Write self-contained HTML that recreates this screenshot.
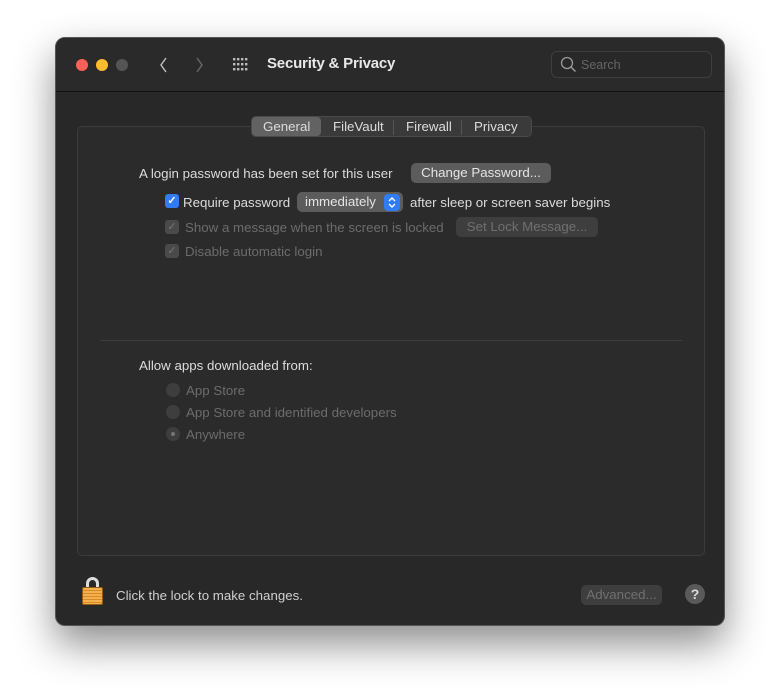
<!DOCTYPE html>
<html><head><meta charset="utf-8"><style>
*{margin:0;padding:0;box-sizing:border-box}
body{width:780px;height:699px;background:#fff;font-family:"Liberation Sans",sans-serif;position:relative;overflow:hidden}
.win{position:absolute;left:55px;top:37px;width:670px;height:589px;background:#282828;border-radius:10px;border:1px solid #555;box-shadow:0 18px 40px rgba(0,0,0,.45);overflow:hidden}
.tb{position:absolute;left:0;top:0;width:100%;height:54px;background:#2a2a2a;border-bottom:1px solid #111}
.a{position:absolute;white-space:nowrap}
.dot{position:absolute;top:21px;width:12px;height:12px;border-radius:50%}
.t{color:#dcdcdc;font-size:13.3px}
.d{color:#6c6c6c;font-size:13.3px}
.btn{position:absolute;background:#5c5c5c;border-radius:5px;color:#e4e4e4;font-size:13.3px;text-align:center;line-height:20px;height:20px}
.btnd{background:#3e3e3e;color:#707070}
.cb{position:absolute;width:14px;height:14px;border-radius:3px;background:#4a4a4a;color:#777;font-size:11px;line-height:14px;text-align:center}
.rd{position:absolute;width:14px;height:14px;border-radius:50%;background:#3e3e3e}
</style></head><body>
<div class="win">
 <div class="tb">
  <div class="dot" style="left:20px;background:#fe5f57"></div>
  <div class="dot" style="left:40px;background:#febc2e"></div>
  <div class="dot" style="left:60px;background:#555"></div>
  <svg class="a" style="left:102px;top:18px" width="10" height="18"><path d="M8 2 L3 9 L8 16" stroke="#bbb" stroke-width="1.5" fill="none"/></svg>
  <svg class="a" style="left:139px;top:18px" width="10" height="18"><path d="M2 2 L7 9 L2 16" stroke="#666" stroke-width="1.5" fill="none"/></svg>
  <svg class="a" style="left:177px;top:20px" width="18" height="14" fill="#bbb">
   <g><rect x="0" y="0" width="2.4" height="2.4"/><rect x="4" y="0" width="2.4" height="2.4"/><rect x="8" y="0" width="2.4" height="2.4"/><rect x="12" y="0" width="2.4" height="2.4"/>
   <rect x="0" y="5" width="2.4" height="2.4"/><rect x="4" y="5" width="2.4" height="2.4"/><rect x="8" y="5" width="2.4" height="2.4"/><rect x="12" y="5" width="2.4" height="2.4"/>
   <rect x="0" y="10" width="2.4" height="2.4"/><rect x="4" y="10" width="2.4" height="2.4"/><rect x="8" y="10" width="2.4" height="2.4"/><rect x="12" y="10" width="2.4" height="2.4"/></g></svg>
  <div class="a" style="left:211px;top:17px;color:#e8e8e8;font-size:15px;font-weight:bold;letter-spacing:-0.2px">Security &amp; Privacy</div>
  <div class="a" style="left:495px;top:13px;width:161px;height:27px;border:1px solid #3e3e3e;border-radius:6px;background:#282828"></div>
  <svg class="a" style="left:504px;top:18px" width="18" height="18"><circle cx="7" cy="7" r="5.5" stroke="#999" stroke-width="1.3" fill="none"/><path d="M11 11 L15.5 15.5" stroke="#999" stroke-width="1.5"/></svg>
  <div class="a" style="left:525px;top:20px;color:#666;font-size:12.5px">Search</div>
 </div>
 <div class="a" style="left:21px;top:88px;width:628px;height:430px;border:1px solid #3c3c3c;border-radius:5px;background:#2b2b2b"></div>
 <div class="a" style="left:195px;top:78px;width:281px;height:21px;border-radius:5px;background:#3a3a3a;border:1px solid #4a4a4a"></div>
 <div class="a" style="left:196px;top:79px;width:69px;height:19px;border-radius:4px;background:#626262"></div>
 <div class="a t" style="left:207px;top:81px">General</div>
 <div class="a t" style="left:277px;top:81px">FileVault</div>
 <div class="a" style="left:337px;top:82px;width:1px;height:15px;background:#555"></div>
 <div class="a t" style="left:350px;top:81px">Firewall</div>
 <div class="a" style="left:405px;top:82px;width:1px;height:15px;background:#555"></div>
 <div class="a t" style="left:418px;top:81px">Privacy</div>

 <div class="a t" style="left:83px;top:128px">A login password has been set for this user</div>
 <div class="btn" style="left:355px;top:125px;width:140px">Change Password...</div>
 <div class="cb" style="left:109px;top:156px;background:#2f7cf6;color:#fff;font-weight:bold">✓</div>
 <div class="a t" style="left:127px;top:157px">Require password</div>
 <div class="btn" style="left:241px;top:154px;width:106px;text-align:left;padding-left:8px">immediately</div>
 <svg class="a" style="left:328px;top:156px" width="16" height="17"><rect width="16" height="17" rx="4" fill="#2f7cf6"/><path d="M5 7 L8 4 L11 7 M5 10 L8 13 L11 10" stroke="#fff" stroke-width="1.4" fill="none"/></svg>
 <div class="a t" style="left:354px;top:157px">after sleep or screen saver begins</div>
 <div class="cb" style="left:109px;top:182px">✓</div>
 <div class="a d" style="left:129px;top:182px">Show a message when the screen is locked</div>
 <div class="btn btnd" style="left:400px;top:179px;width:142px">Set Lock Message...</div>
 <div class="cb" style="left:109px;top:206px">✓</div>
 <div class="a d" style="left:129px;top:206px">Disable automatic login</div>

 <div class="a" style="left:44px;top:302px;width:582px;height:1px;background:#3e3e3e"></div>
 <div class="a t" style="left:83px;top:320px">Allow apps downloaded from:</div>
 <div class="rd" style="left:110px;top:345px"></div>
 <div class="a d" style="left:130px;top:345px">App Store</div>
 <div class="rd" style="left:110px;top:367px"></div>
 <div class="a d" style="left:130px;top:367px">App Store and identified developers</div>
 <div class="rd" style="left:110px;top:389px"><div style="position:absolute;left:5px;top:5px;width:4px;height:4px;border-radius:50%;background:#777"></div></div>
 <div class="a d" style="left:130px;top:389px">Anywhere</div>

 <div class="a" style="left:30px;top:539px;width:13px;height:16px;border:3px solid #ddd;border-bottom:none;border-radius:7px 7px 0 0"></div>
 <div class="a" style="left:26px;top:549px;width:21px;height:18px;border-radius:2px;background:repeating-linear-gradient(#f3b04c 0 2px,#d88a2a 2px 3px);border:1px solid #9a5a10"></div>
 <div class="a" style="left:60px;top:550px;color:#cfcfcf;font-size:13.3px">Click the lock to make changes.</div>
 <div class="btn btnd" style="left:525px;top:547px;width:81px">Advanced...</div>
 <div class="a" style="left:629px;top:546px;width:20px;height:20px;border-radius:50%;background:#5a5a5a;color:#ddd;font-size:14px;font-weight:bold;text-align:center;line-height:20px">?</div>
</div>
</body></html>
